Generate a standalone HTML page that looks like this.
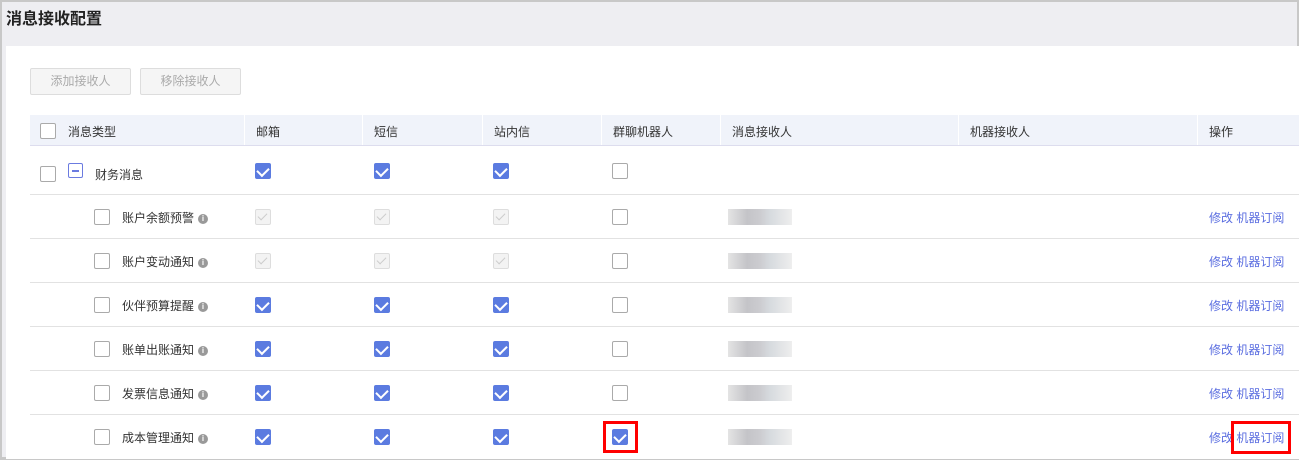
<html><head><style>
body{margin:0;width:1299px;height:459px;overflow:hidden;background:#fff;font-family:"Liberation Sans","Noto Sans CJK SC",sans-serif;font-size:12px;color:#333}
.frame{position:absolute;left:0;top:0;width:1295px;height:455px;border:2px solid #c8c8c8;border-bottom-width:3px;background:#eeeef2}
.title{position:absolute;left:6px;top:5px;font-size:16px;font-weight:bold;color:#222}
.content{position:absolute;left:6px;top:46px;right:0;bottom:0;background:#fff}
.btn{position:absolute;top:68px;width:99px;height:25px;border:1px solid #ddd;background:#f5f5f5;color:#aaa;text-align:center;line-height:25px;border-radius:2px}
.a{position:absolute}
.hdr{position:absolute;left:30px;top:115px;width:1269px;height:30px;background:#f0f3fa;border-bottom:1px solid #dde}
.hdr span{position:absolute;top:8px;color:#333}
.vs{position:absolute;top:0;width:1px;height:30px;background:#fff}
.line{position:absolute;left:30px;width:1269px;height:1px;background:#e2e2e2}
.cb{position:absolute;width:14px;height:14px;border:1px solid #aaa;border-radius:2px;background:#fff}
.ck{position:absolute;width:16px;height:16px;background:#5b7be0;border-radius:2px}
.ck:after,.dk:after{content:"";position:absolute;left:4px;top:2px;width:6px;height:9px;border:solid #fff;border-width:0 2px 2px 0;transform:rotate(45deg)}
.dk{position:absolute;width:14px;height:14px;border:1px solid #ddd;border-radius:2px;background:#f3f3f3}
.dk:after{border-color:#ccc;left:4px;top:1px;width:4px;height:8px;border-width:0 1.5px 1.5px 0}
.info{display:inline-block;width:10px;height:10px;border-radius:50%;background:#999;color:#fff;font-size:8px;line-height:10px;text-align:center;margin-left:4px;vertical-align:1px;font-weight:bold}
.blur{position:absolute;left:728px;width:64px;height:16px;background:linear-gradient(90deg,#e4e4e4,#c4c4c8 30%,#ccccd0 50%,#d6dade 65%,#eeeeee)}
.act{position:absolute;left:1209px;color:#5b6ee0}
.red{position:absolute;border:3px solid #f00}
</style></head><body>
<div class="frame"></div>
<div class="title">消息接收配置</div>
<div class="content"></div>
<div class="btn" style="left:30px">添加接收人</div>
<div class="btn" style="left:140px">移除接收人</div>
<div class="hdr">
<div class="cb" style="left:10px;top:8px"></div>
<span style="left:38px">消息类型</span><div class="vs" style="left:214px"></div>
<span style="left:226px">邮箱</span><div class="vs" style="left:332px"></div>
<span style="left:344px">短信</span><div class="vs" style="left:452px"></div>
<span style="left:464px">站内信</span><div class="vs" style="left:571px"></div>
<span style="left:583px">群聊机器人</span><div class="vs" style="left:690px"></div>
<span style="left:702px">消息接收人</span><div class="vs" style="left:928px"></div>
<span style="left:940px">机器接收人</span><div class="vs" style="left:1167px"></div>
<span style="left:1179px">操作</span>
</div>
<div class="cb" style="left:40px;top:166px"></div>
<div class="a" style="left:68px;top:163px;width:13px;height:13px;border:1px solid #6b7be0;border-radius:2px"><div style="position:absolute;left:3px;top:6px;width:7px;height:1.5px;background:#6b7be0"></div></div>
<div class="a" style="left:95px;top:166px">财务消息</div>
<div class="ck" style="left:255px;top:163px"></div>
<div class="ck" style="left:374px;top:163px"></div>
<div class="ck" style="left:493px;top:163px"></div>
<div class="cb" style="left:612px;top:163px"></div>
<div class="line" style="top:194px"></div>

<div id="rows"></div>
<script>
var rows=[["账户余额预警",0],["账户变动通知",0],["伙伴预算提醒",1],["账单出账通知",1],["发票信息通知",1],["成本管理通知",1]];
var h="";
rows.forEach(function(r,i){
 var c=217+i*44;
 h+='<div class="cb" style="left:94px;top:'+(c-8)+'px"></div>';
 h+='<div class="a" style="left:122px;top:'+(c-8)+'px">'+r[0]+'<span class="info">i</span></div>';
 [255,374,493].forEach(function(x){h+='<div class="'+(r[1]?'ck':'dk')+'" style="left:'+x+'px;top:'+(c-8)+'px"></div>';});
 if(i==5)h+='<div class="ck" style="left:612px;top:'+(c-8)+'px"></div>';
 else h+='<div class="cb" style="left:612px;top:'+(c-8)+'px"></div>';
 h+='<div class="blur" style="top:'+(c-8)+'px"></div>';
 h+='<div class="act" style="top:'+(c-8)+'px">修改 机器订阅</div>';
 if(i<5)h+='<div class="line" style="top:'+(c+21)+'px"></div>';
});
document.getElementById("rows").innerHTML=h;
</script>
<div class="red" style="left:603px;top:421px;width:29px;height:26px"></div>
<div class="red" style="left:1231px;top:421px;width:54px;height:27px"></div>
</body></html>
